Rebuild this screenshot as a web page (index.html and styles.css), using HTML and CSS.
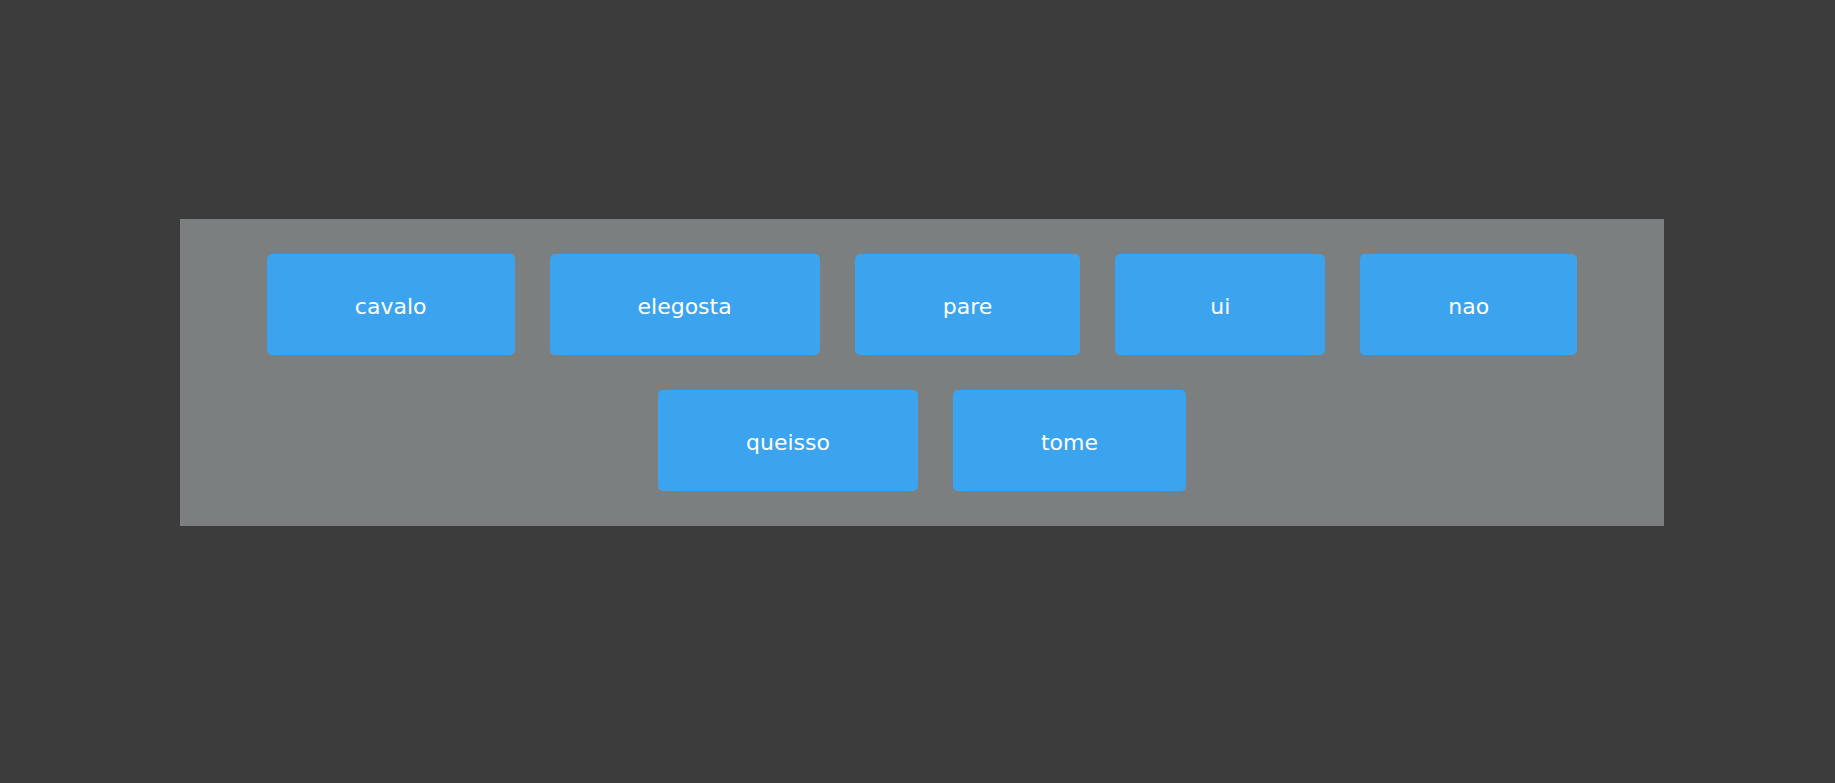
FILE: index.html
```html
<!DOCTYPE html>
<html lang="pt">
<head>
  <meta charset="UTF-8">
  <meta name="viewport" content="width=device-width, initial-scale=1.0">
  <link rel="stylesheet" href="styles.css">
  <title>Palavras</title>
</head>
<body>
  <div class="container">
    <div class="word">cavalo</div>
    <div class="word">elegosta</div>
    <div class="word">pare</div>
    <div class="word">ui</div>
    <div class="word">nao</div>
    <div class="word">queisso</div>
    <div class="word">tome</div>
  </div>
</body>
</html>
```
FILE: styles.css
```css
  body {
    margin: 0;
    padding: 219px 0 0 180px;
    background-color: #3c3c3c;
    font-family: "DejaVu Sans", Verdana, sans-serif;
  }

  .container {
    display: flex;
    flex-wrap: wrap;
    justify-content: center;
    gap: 35px;
    box-sizing: border-box;
    width: 1484px;
    padding: 35px 0;
    background-color: #7c7f7f;
  }

  .word {
    display: flex;
    justify-content: center;
    align-items: center;
    box-sizing: border-box;
    min-width: 210px;
    height: 101px;
    padding: 3px 88px 0;
    border-radius: 5px;
    background-color: #3ca4ef;
    color: #ffffff;
    font-size: 22px;
  }
```
